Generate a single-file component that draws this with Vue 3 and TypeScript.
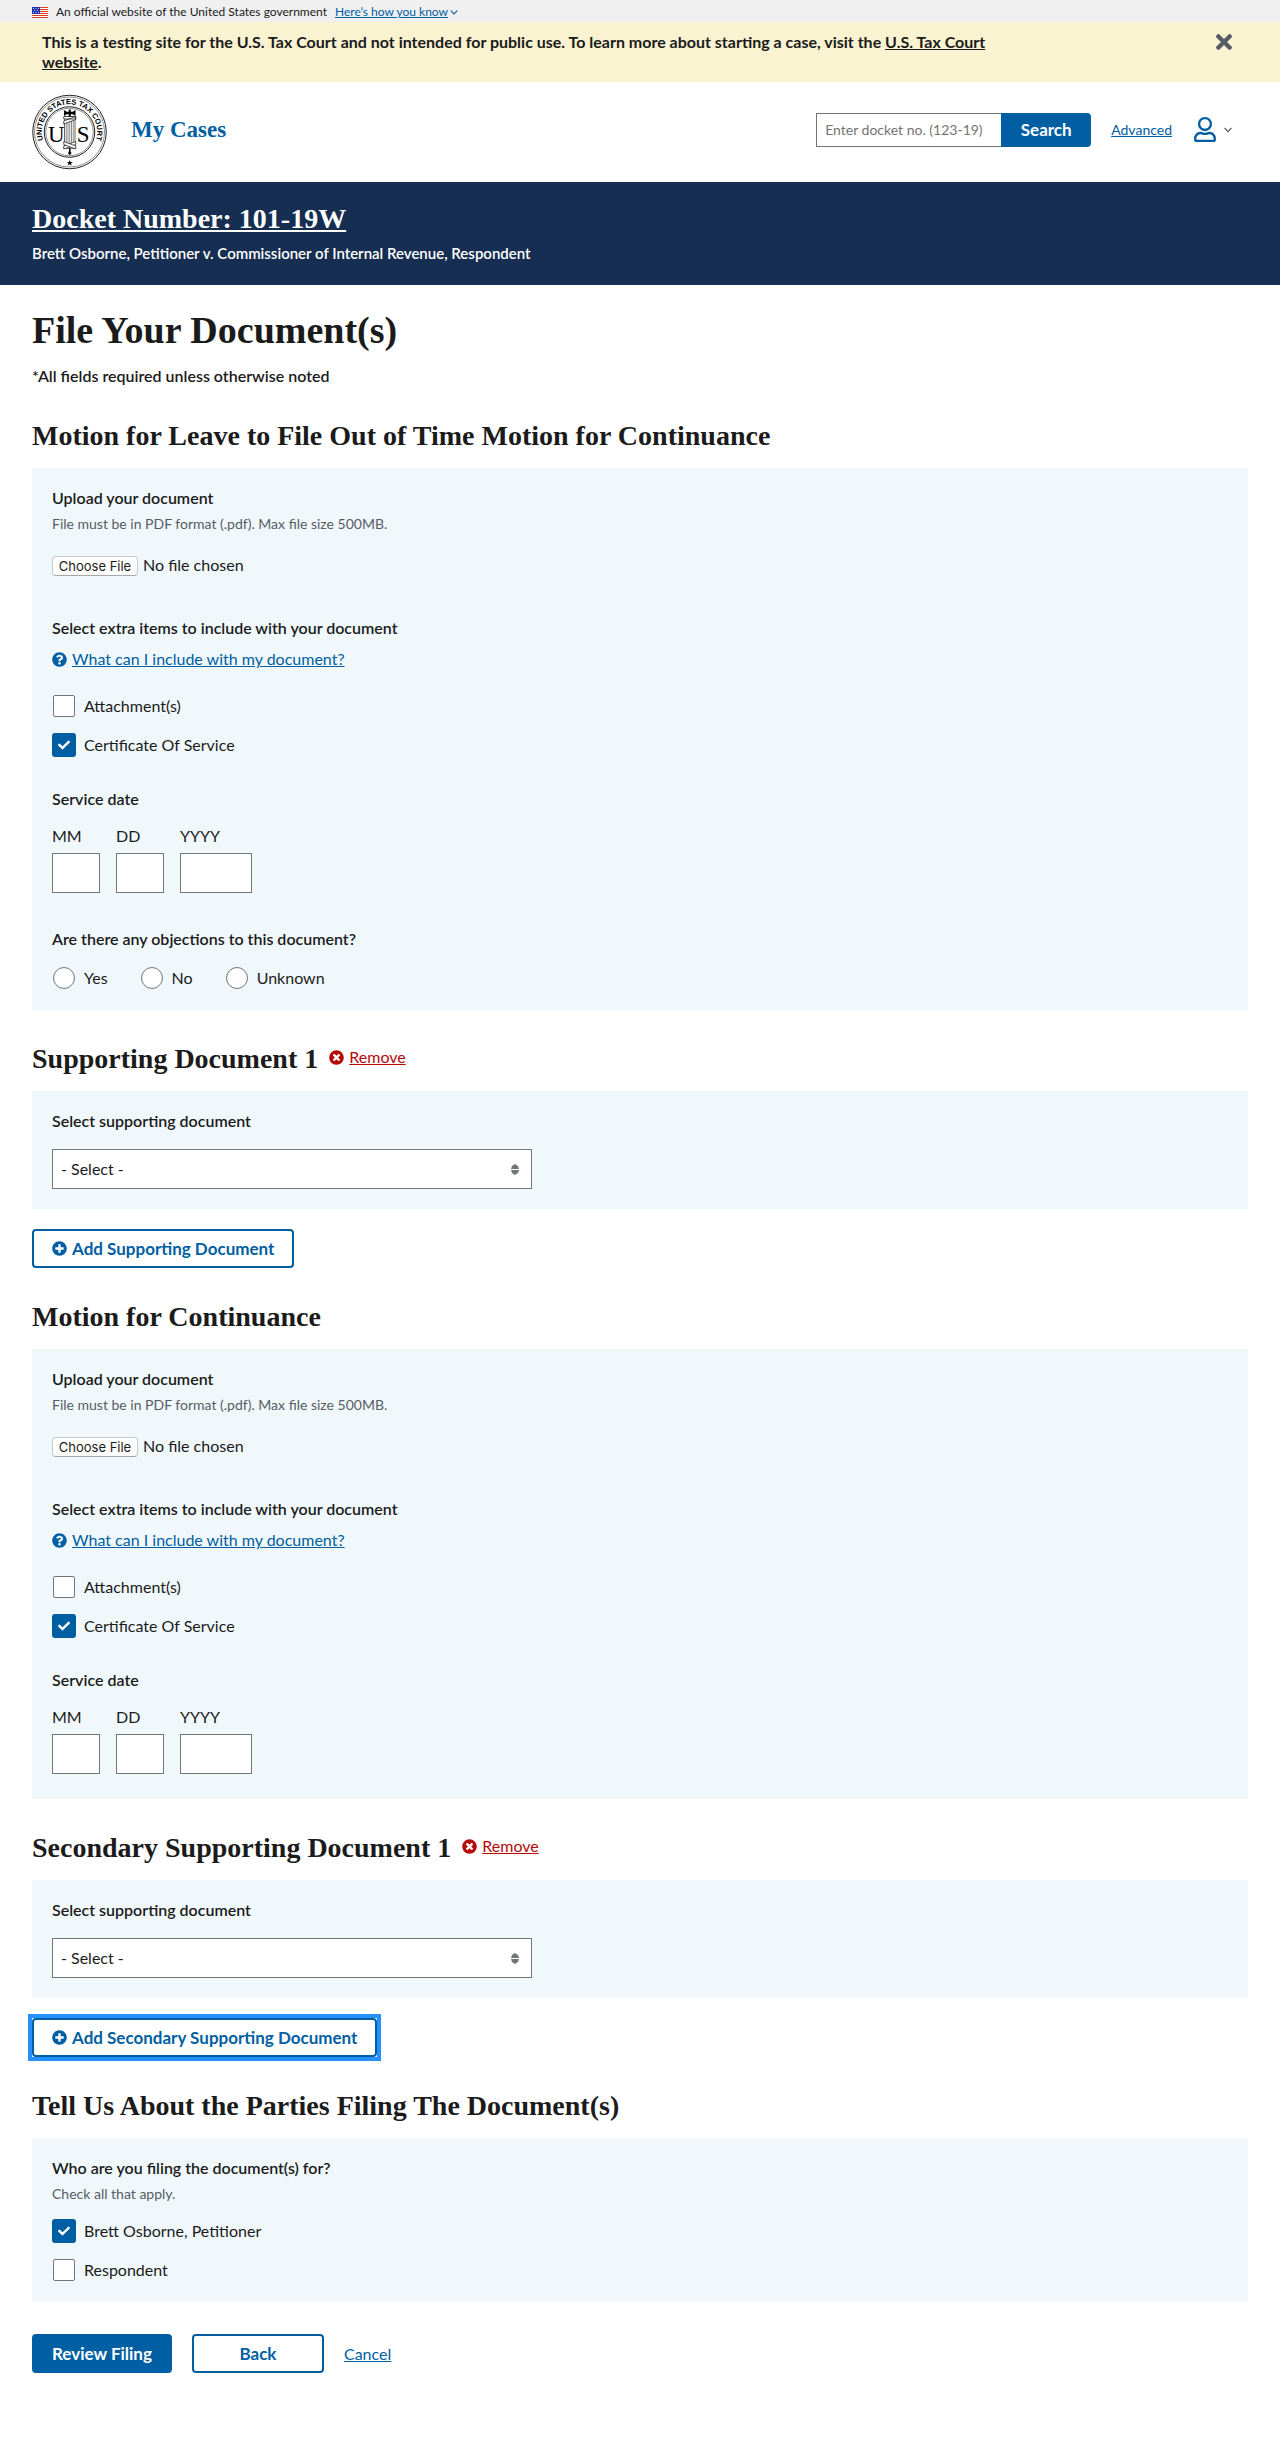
<script setup lang="ts">
import { reactive, ref } from 'vue'

interface Filing {
  id: string
  title: string
  attachments: boolean
  certificate: boolean
  askObjections: boolean
  supportingTitle: string
  addLabel: string
  addFocused: boolean
}

interface Party {
  id: string
  name: string
  selected: boolean
}

const filings = reactive<Filing[]>([
  {
    id: 'primary',
    title: 'Motion for Leave to File Out of Time Motion for Continuance',
    attachments: false,
    certificate: true,
    askObjections: true,
    supportingTitle: 'Supporting Document 1',
    addLabel: 'Add Supporting Document',
    addFocused: false,
  },
  {
    id: 'secondary',
    title: 'Motion for Continuance',
    attachments: false,
    certificate: true,
    askObjections: false,
    supportingTitle: 'Secondary Supporting Document 1',
    addLabel: 'Add Secondary Supporting Document',
    addFocused: true,
  },
])

const parties = reactive<Party[]>([
  { id: 'petitioner', name: 'Brett Osborne, Petitioner', selected: true },
  { id: 'respondent', name: 'Respondent', selected: false },
])

const dateParts = [
  { key: 'month', label: 'MM', wide: false },
  { key: 'day', label: 'DD', wide: false },
  { key: 'year', label: 'YYYY', wide: true },
]

const objectionChoices = ['Yes', 'No', 'Unknown']
const docketSearch = ref('')

const stripes = [0, 2, 4, 6, 8, 10]

const icons = {
  help: 'M504 256c0 136.997-111.043 248-248 248S8 392.997 8 256C8 119.083 119.043 8 256 8s248 111.083 248 248zM262.655 90c-54.497 0-89.255 22.957-116.549 63.758-3.536 5.286-2.353 12.415 2.715 16.258l34.699 26.31c5.205 3.947 12.621 3.008 16.665-2.122 17.864-22.658 30.113-35.797 57.303-35.797 20.429 0 45.698 13.148 45.698 32.958 0 14.976-12.363 22.667-32.534 33.976C247.128 238.528 216 254.941 216 296v4c0 6.627 5.373 12 12 12h56c6.627 0 12-5.373 12-12v-1.333c0-28.462 83.186-29.647 83.186-106.667 0-58.002-60.165-102-116.531-102zM256 338c-25.365 0-46 20.635-46 46 0 25.364 20.635 46 46 46s46-20.636 46-46c0-25.365-20.635-46-46-46z',
  remove:
    'M256 8C119 8 8 119 8 256s111 248 248 248 248-111 248-248S393 8 256 8zm121.6 313.1c4.7 4.7 4.7 12.3 0 17L338 377.6c-4.7 4.7-12.3 4.7-17 0L256 312l-65.1 65.6c-4.7 4.7-12.3 4.7-17 0L134.4 338c-4.7-4.7-4.7-12.3 0-17l65.6-65-65.6-65.1c-4.7-4.7-4.7-12.3 0-17l39.6-39.6c4.7-4.7 12.3-4.7 17 0l65 65.7 65.1-65.6c4.7-4.7 12.3-4.7 17 0l39.6 39.6c4.7 4.7 4.7 12.3 0 17L312 256l65.6 65.1z',
  add: 'M256 8C119 8 8 119 8 256s111 248 248 248 248-111 248-248S393 8 256 8zm144 276c0 6.6-5.4 12-12 12h-92v92c0 6.6-5.4 12-12 12h-56c-6.6 0-12-5.4-12-12v-92h-92c-6.6 0-12-5.4-12-12v-56c0-6.6 5.4-12 12-12h92v-92c0-6.6 5.4-12 12-12h56c6.6 0 12 5.4 12 12v92h92c6.6 0 12 5.4 12 12v56z',
  close:
    'M242.72 256l100.07-100.07c12.28-12.28 12.28-32.19 0-44.48l-22.24-22.24c-12.28-12.28-32.19-12.28-44.48 0L176 189.28 75.93 89.21c-12.28-12.28-32.19-12.28-44.48 0L9.21 111.45c-12.28 12.28-12.28 32.19 0 44.48L109.28 256 9.21 356.07c-12.28 12.28-12.28 32.19 0 44.48l22.24 22.24c12.28 12.28 32.2 12.28 44.48 0L176 322.72l100.07 100.07c12.28 12.28 32.2 12.28 44.48 0l22.24-22.24c12.28-12.28 12.28-32.19 0-44.48L242.72 256z',
  user: 'M313.6 304c-28.7 0-42.5 16-89.6 16-47.1 0-60.8-16-89.6-16C60.2 304 0 364.2 0 438.4V464c0 26.5 21.5 48 48 48h352c26.5 0 48-21.5 48-48v-25.6c0-74.2-60.2-134.4-134.4-134.4zM400 464H48v-25.6c0-47.6 38.8-86.4 86.4-86.4 14.6 0 38.3 16 89.6 16 51.7 0 74.9-16 89.6-16 47.6 0 86.4 38.8 86.4 86.4V464zM224 288c79.5 0 144-64.5 144-144S303.5 0 224 0 80 64.5 80 144s64.5 144 144 144zm0-240c52.9 0 96 43.1 96 96s-43.1 96-96 96-96-43.1-96-96 43.1-96 96-96z',
}
</script>

<template>
  <div class="page">
    <div class="gov-banner">
      <svg class="flag" viewBox="0 0 16 11" aria-hidden="true">
        <rect width="16" height="11" fill="#fff" />
        <rect v-for="y in stripes" :key="y" :y="y" width="16" height="1" fill="#db3e1f" />
        <rect width="8" height="7" fill="#1e33b1" />
        <g fill="#fff">
          <circle cx="1.5" cy="1.5" r=".5" /><circle cx="4" cy="1.5" r=".5" /><circle cx="6.5" cy="1.5" r=".5" />
          <circle cx="2.7" cy="3.5" r=".5" /><circle cx="5.3" cy="3.5" r=".5" />
          <circle cx="1.5" cy="5.5" r=".5" /><circle cx="4" cy="5.5" r=".5" /><circle cx="6.5" cy="5.5" r=".5" />
        </g>
      </svg>
      <span>An official website of the United States government</span>
      <button type="button" class="banner-toggle">
        <span>Here’s how you know</span>
        <svg class="banner-chevron" viewBox="0 0 8 5" aria-hidden="true"><path d="M.7.7 4 4 7.3.7" /></svg>
      </button>
    </div>

    <div class="test-notice">
      <p>
        This is a testing site for the U.S. Tax Court and not intended for public use. To learn more about starting a
        case, visit the <a href="#">U.S. Tax Court website</a>.
      </p>
      <button type="button" class="notice-close" aria-label="Close">
        <svg viewBox="0 80 352 352" aria-hidden="true"><path :d="icons.close" /></svg>
      </button>
    </div>

    <header class="site-header">
      <a href="#" class="seal" aria-label="United States Tax Court">
        <svg viewBox="0 0 300 300" aria-hidden="true">
          <defs>
            <path id="seal-arc" d="M45.7 188A111 111 0 1 1 254.3 188" />
          </defs>
          <g fill="none" stroke="#222">
            <circle cx="150" cy="150" r="147" stroke-width="4" />
            <circle cx="150" cy="150" r="140" stroke-width="2" />
            <circle cx="150" cy="150" r="101" stroke-width="4" />
            <circle cx="150" cy="150" r="95" stroke-width="2" />
          </g>
          <text class="seal-ring" text-anchor="middle">
            <textPath href="#seal-arc" startOffset="50%">UNITED STATES TAX COURT</textPath>
          </text>
          <text class="seal-letter" x="97" y="188" text-anchor="middle">U</text>
          <text class="seal-letter" x="205" y="188" text-anchor="middle">S</text>
          <rect x="130" y="88" width="42" height="127" fill="#fff" stroke="#333" stroke-width="3" />
          <path
            d="M137 92v122M144 92v122M151 92v122M158 92v122M165 92v122"
            stroke="#666"
            stroke-width="3"
          />
          <g fill="#fff" stroke="#222" stroke-width="3">
            <path d="M127 106l48-18v12l-48 18zM127 88h48v10h-48zM127 206l48-18v12l-48 18z" />
            <path d="M127 188l48 18v12l-48-18z" />
          </g>
          <path d="M128 62l11 7h8v-9h8v9h8l11-7v24l-11-7h-8v10h-8v-10h-8l-11 7z" />
          <path d="M148 215h6v12l4 8-7 8-7-8 4-8z" />
          <path d="M151 262l3 8h9l-7 5 3 9-8-5-8 5 3-9-7-5h9z" />
        </svg>
      </a>
      <div class="header-tools">
        <a href="#" class="my-cases">My Cases</a>
        <form class="search" @submit.prevent>
          <input v-model="docketSearch" type="text" aria-label="Docket number" placeholder="Enter docket no. (123-19)" />
          <button type="submit">Search</button>
        </form>
        <a href="#" class="advanced">Advanced</a>
        <button type="button" class="account" aria-label="My account">
          <svg class="account-user" viewBox="0 0 448 512" aria-hidden="true"><path :d="icons.user" /></svg>
          <svg class="account-chevron" viewBox="0 0 8 6" aria-hidden="true"><path d="M.6 1 4 4.6 7.4 1" /></svg>
        </button>
      </div>
    </header>

    <div class="case-bar">
      <p class="docket"><a href="#">Docket Number: 101-19W</a></p>
      <p class="caption">Brett Osborne, Petitioner v. Commissioner of Internal Revenue, Respondent</p>
    </div>

    <main class="content">
      <h1>File Your Document(s)</h1>
      <p class="required-note">*All fields required unless otherwise noted</p>

      <section v-for="filing in filings" :key="filing.id" class="filing">
        <h2>{{ filing.title }}</h2>
        <div class="panel">
          <div class="upload">
            <label class="field-title" :for="`${filing.id}-file`">Upload your document</label>
            <span class="hint">File must be in PDF format (.pdf). Max file size 500MB.</span>
            <input :id="`${filing.id}-file`" type="file" accept=".pdf" />
          </div>

          <fieldset class="extras">
            <legend class="field-title">Select extra items to include with your document</legend>
            <button type="button" class="icon-link help">
              <svg class="icon" viewBox="0 0 512 512" aria-hidden="true"><path :d="icons.help" /></svg>
              <span>What can I include with my document?</span>
            </button>
            <div class="choice-list">
              <label class="choice">
                <input v-model="filing.attachments" type="checkbox" />
                <span>Attachment(s)</span>
              </label>
              <label class="choice">
                <input v-model="filing.certificate" type="checkbox" />
                <span>Certificate Of Service</span>
              </label>
            </div>
          </fieldset>

          <fieldset class="service-date">
            <legend class="field-title">Service date</legend>
            <div class="date-fields">
              <div v-for="part in dateParts" :key="part.key" class="date-part" :class="{ wide: part.wide }">
                <label :for="`${filing.id}-${part.key}`">{{ part.label }}</label>
                <input :id="`${filing.id}-${part.key}`" type="text" inputmode="numeric" />
              </div>
            </div>
          </fieldset>

          <fieldset v-if="filing.askObjections" class="objections">
            <legend class="field-title">Are there any objections to this document?</legend>
            <div class="choice-row">
              <label v-for="choice in objectionChoices" :key="choice" class="choice">
                <input type="radio" :name="`${filing.id}-objections`" :value="choice" />
                <span>{{ choice }}</span>
              </label>
            </div>
          </fieldset>
        </div>

        <div class="heading-row">
          <h2>{{ filing.supportingTitle }}</h2>
          <button type="button" class="icon-link remove">
            <svg class="icon" viewBox="0 0 512 512" aria-hidden="true"><path :d="icons.remove" /></svg>
            <span>Remove</span>
          </button>
        </div>
        <div class="panel select-panel">
          <label class="field-title" :for="`${filing.id}-supporting`">Select supporting document</label>
          <select :id="`${filing.id}-supporting`">
            <option>- Select -</option>
          </select>
        </div>
        <button type="button" class="button outline add" :class="{ focused: filing.addFocused }">
          <svg class="icon" viewBox="0 0 512 512" aria-hidden="true"><path :d="icons.add" /></svg>
          <span>{{ filing.addLabel }}</span>
        </button>
      </section>

      <section>
        <h2>Tell Us About the Parties Filing The Document(s)</h2>
        <fieldset class="panel parties">
          <legend class="field-title">Who are you filing the document(s) for?</legend>
          <span class="hint">Check all that apply.</span>
          <div class="choice-list">
            <label v-for="party in parties" :key="party.id" class="choice">
              <input v-model="party.selected" type="checkbox" />
              <span>{{ party.name }}</span>
            </label>
          </div>
        </fieldset>
      </section>

      <div class="actions">
        <button type="button" class="button">Review Filing</button>
        <button type="button" class="button outline back">Back</button>
        <a href="#">Cancel</a>
      </div>
    </main>
  </div>
</template>

<style>
body {
  background: #fff;
}
</style>

<style scoped>
.page {
  --blue: #005ea2;
  --ink: #1b1b1b;
  --gray: #565c65;
  --line: #71767a;
  --sans: Lato, 'Noto Sans', sans-serif;
  --serif: 'Liberation Serif', 'Times New Roman', serif;
  color: var(--ink);
  font: 16px/20px var(--sans);
  padding-bottom: 64px;
}

.page *,
.page *::before,
.page *::after {
  box-sizing: border-box;
}

p,
h1,
h2,
fieldset {
  margin: 0;
  padding: 0;
  border: 0;
  min-width: 0;
}

legend {
  padding: 0;
  float: left;
  width: 100%;
}

legend + * {
  clear: both;
}

a {
  color: var(--blue);
}

svg {
  display: block;
  flex: none;
}

button {
  font: inherit;
  cursor: pointer;
}

input,
select {
  font: inherit;
  color: inherit;
}

.gov-banner {
  display: flex;
  align-items: center;
  height: 22px;
  padding: 2px 32px 0;
  background: #f0f0f0;
  font-size: 12px;
  line-height: 16px;
}

.flag {
  width: 16px;
  height: 11px;
  margin-right: 8px;
}

.banner-toggle {
  display: flex;
  align-items: center;
  gap: 2px;
  margin-left: 8px;
  padding: 0;
  border: 0;
  background: none;
  color: var(--blue);
}

.banner-toggle span {
  text-decoration: underline;
}

.banner-chevron {
  width: 8px;
  height: 5px;
}

.banner-chevron path,
.account-chevron path {
  fill: none;
  stroke: currentColor;
  stroke-width: 1.2;
}

.test-notice {
  display: flex;
  align-items: flex-start;
  justify-content: space-between;
  gap: 32px;
  padding: 10px 48px 10px 42px;
  background: #faf3d1;
}

.test-notice p {
  max-width: 960px;
  font-weight: 700;
}

.test-notice a {
  color: inherit;
}

.notice-close {
  padding: 2px 0 0;
  border: 0;
  background: none;
}

.notice-close svg {
  width: 16px;
  height: 16px;
  fill: var(--gray);
}

.site-header {
  display: flex;
  align-items: center;
  gap: 24px;
  padding: 12px 48px 12px 32px;
}

.seal svg {
  width: 75px;
  height: 76px;
}

.seal-ring {
  font: 700 30px 'Liberation Sans', Arial, sans-serif;
}

.seal-letter {
  font: 92px 'Liberation Serif', serif;
}

.header-tools {
  flex: 1;
  display: flex;
  align-items: center;
  padding-bottom: 5px;
}

.my-cases {
  margin-right: auto;
  font: 700 23px/28px var(--serif);
  text-decoration: none;
}

.search {
  display: flex;
  height: 34px;
}

.search input {
  width: 185px;
  height: 34px;
  padding: 0 8px;
  border: 1px solid var(--line);
  border-right: 0;
  border-radius: 0;
  outline: 0;
  font-size: 14px;
}

.search input::placeholder {
  color: #757575;
}

.search button {
  width: 90px;
  padding: 0;
  border: 0;
  border-radius: 0 4px 4px 0;
  background: var(--blue);
  color: #fff;
  font-size: 17px;
  font-weight: 700;
}

.advanced {
  margin: 0 22px 0 20px;
  font-size: 14px;
}

.account {
  display: flex;
  align-items: center;
  gap: 8px;
  padding: 0;
  border: 0;
  background: none;
  color: var(--gray);
}

.account-user {
  width: 22px;
  height: 25px;
  fill: var(--blue);
}

.account-chevron {
  width: 8px;
  height: 6px;
}

.case-bar {
  padding: 19px 32px 22px;
  background: #162e51;
  color: #fff;
}

.docket {
  font: 700 28px/36px var(--serif);
}

.docket a {
  color: inherit;
}

.caption {
  margin-top: 6px;
  font-size: 15px;
  font-weight: 600;
}

.content {
  padding: 23px 32px 0;
}

h1 {
  font: 700 38px/44px var(--serif);
}

.required-note {
  margin-top: 13px;
  line-height: 22px;
  font-weight: 600;
}

h2 {
  font: 700 28px/36px var(--serif);
  margin-top: 31px;
}

.panel {
  margin-top: 14px;
  padding: 20px;
  background: #f0f8fc;
}

.field-title {
  display: block;
  font-weight: 600;
}

.hint {
  display: block;
  padding-top: 6px;
  color: var(--gray);
  font-size: 14px;
}

.upload input {
  display: block;
  width: 320px;
  margin-top: 21px;
  height: 24px;
}

.upload input::file-selector-button {
  width: 86px;
  height: 20px;
  margin: 0 5px 0 0;
  padding: 0;
  border: 1px solid #c4c8ca;
  border-bottom-color: #a3a8ab;
  border-radius: 4px;
  background: #fff;
  color: var(--ink);
  font: 13px/16px Inter, 'Liberation Sans', sans-serif;
}

.extras {
  margin-top: 39px;
}

.icon {
  width: 15px;
  height: 15px;
  fill: currentColor;
}

.icon-link {
  display: flex;
  align-items: center;
  gap: 5px;
  padding: 0;
  border: 0;
  background: none;
  color: var(--blue);
}

.icon-link span {
  text-decoration: underline;
}

.icon-link.help {
  padding-top: 11px;
}

.icon-link.remove {
  padding-bottom: 4px;
  color: #b50909;
}

.choice-list {
  display: flex;
  flex-direction: column;
  align-items: flex-start;
  gap: 15px;
  margin-top: 25px;
}

.choice-row {
  display: flex;
  gap: 32px;
  padding-top: 17px;
}

.choice {
  display: flex;
  align-items: center;
  gap: 8px;
  height: 24px;
}

.choice input {
  appearance: none;
  flex: none;
  width: 22px;
  height: 22px;
  margin: 1px;
  border: 1px solid var(--line);
  border-radius: 2px;
  background: #fff;
}

.choice input[type='radio'] {
  border-radius: 50%;
}

.choice input[type='radio']:checked {
  border: 5px solid var(--blue);
}

.choice input[type='checkbox']:checked {
  border-color: var(--blue);
  box-shadow: 0 0 0 1px var(--blue);
  background: var(--blue)
    url("data:image/svg+xml,%3Csvg xmlns='http://www.w3.org/2000/svg' viewBox='0 0 512 512'%3E%3Cpath fill='%23fff' d='M173.898 439.404l-166.4-166.4c-9.997-9.997-9.997-26.206 0-36.204l36.203-36.204c9.997-9.998 26.207-9.998 36.204 0L192 312.69 432.095 72.596c9.997-9.997 26.207-9.997 36.204 0l36.203 36.204c9.997 9.997 9.997 26.206 0 36.204l-294.4 294.401c-9.998 9.997-26.207 9.997-36.204-.001z'/%3E%3C/svg%3E")
    center / 12px 12px no-repeat;
}

.service-date {
  margin-top: 32px;
  padding-bottom: 5px;
}

.date-fields {
  display: flex;
  gap: 16px;
  padding-top: 17px;
}

.date-part {
  width: 48px;
}

.date-part.wide {
  width: 72px;
}

.date-part label {
  display: block;
}

.date-part input {
  display: block;
  width: 100%;
  height: 40px;
  margin-top: 7px;
  padding: 8px;
  border: 1px solid var(--line);
  border-radius: 0;
  background: #fff;
}

.objections {
  margin-top: 31px;
}

.heading-row {
  display: flex;
  align-items: center;
  gap: 11px;
  margin-top: 31px;
}

.heading-row h2 {
  margin-top: 0;
}

.select-panel select {
  display: block;
  appearance: none;
  width: 100%;
  max-width: 480px;
  height: 40px;
  margin-top: 18px;
  padding: 0 32px 0 8px;
  border: 1px solid var(--line);
  border-radius: 0;
  background: #fff
    url("data:image/svg+xml,%3Csvg xmlns='http://www.w3.org/2000/svg' width='8' height='11' viewBox='0 0 8 11'%3E%3Cpath fill='%2371767a' d='M4 0l3 2 1 3H0l1-3zM0 6h8L7 9l-3 2-3-2z'/%3E%3C/svg%3E")
    right 12px center / 8px 11px no-repeat;
}

.button {
  position: relative;
  display: flex;
  align-items: center;
  justify-content: center;
  gap: 5px;
  height: 39px;
  padding: 0 20px;
  border: 0;
  border-radius: 4px;
  background: var(--blue);
  color: #fff;
  font-size: 17px;
  font-weight: 700;
}

.button.outline {
  border: 2px solid var(--blue);
  padding: 0 18px;
  background: #fff;
  color: var(--blue);
}

.button.add {
  margin-top: 20px;
}

.button.focused::after {
  content: '';
  position: absolute;
  inset: -6px;
  border: 4px solid #2491ff;
}

.parties .choice-list {
  margin-top: 15px;
}

.actions {
  display: flex;
  align-items: center;
  gap: 20px;
  margin-top: 32px;
}

.button.back {
  width: 132px;
}
</style>
